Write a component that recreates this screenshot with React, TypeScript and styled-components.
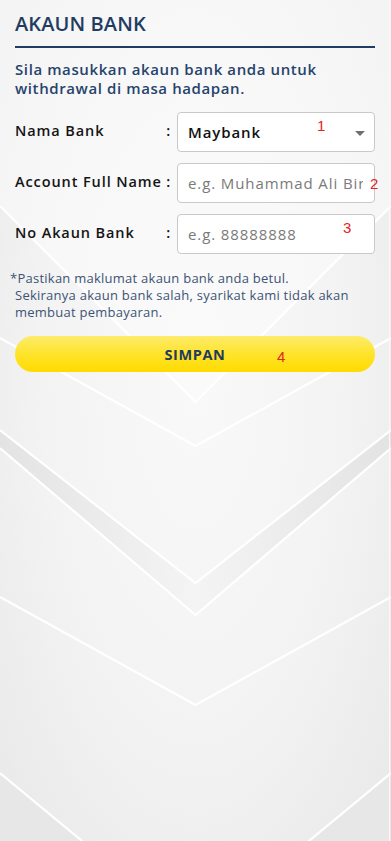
import styled, { createGlobalStyle } from "styled-components";

const GlobalStyle = createGlobalStyle`
	* { box-sizing: border-box; }
	html, body { margin: 0; padding: 0; }
	body {
		font-family: "Open Sans", "Liberation Sans", sans-serif;
		background: #ededed;
	}
`;

const Page = styled.div`
	position: relative;
	width: 391px;
	min-height: 841px;
	overflow: hidden;
	background: radial-gradient(ellipse at 50% 45%, #f9f9f9 0%, #f3f3f3 55%, #e8e8e8 100%);
`;

const Backdrop = styled.svg`
	position: absolute;
	inset: 0;
	width: 391px;
	height: 841px;
	z-index: 0;
`;

const Content = styled.div`
	position: relative;
	z-index: 1;
	padding: 12px 16px 0 15px;
`;

const Title = styled.h1`
	margin: 0;
	font-size: 20px;
	font-weight: 600;
	color: #1f3c63;
	line-height: 24px;
	letter-spacing: 0.1px;
	padding-bottom: 10px;
	border-bottom: 2.5px solid #1f3c63;
`;

const Intro = styled.p`
	margin: 12px 0 14px;
	font-size: 15px;
	font-weight: 600;
	line-height: 19px;
	letter-spacing: 0.6px;
	color: #26436b;
`;

const Form = styled.div`
	display: flex;
	flex-direction: column;
	gap: 11px;
`;

const Row = styled.div`
	position: relative;
	display: grid;
	grid-template-columns: 162px minmax(0, 1fr);
	align-items: center;
`;

const Label = styled.label`
	display: flex;
	justify-content: space-between;
	padding-right: 6px;
	font-size: 14.5px;
	font-weight: 600;
	letter-spacing: 0.9px;
	color: #151515;
	margin-top: -4px;
`;

const Field = styled.div`
	position: relative;
	min-width: 0;
	height: 40px;
	background: #fff;
	border: 1px solid #c9c9c9;
	border-radius: 4px;
	display: flex;
	align-items: center;
	padding: 0 11px 0 10px;
`;

const Value = styled.span<{ $placeholder?: boolean }>`
	flex: 1;
	min-width: 0;
	overflow: hidden;
	font-size: 15px;
	font-weight: ${(p) => (p.$placeholder ? 500 : 600)};
	color: ${(p) => (p.$placeholder ? "#7a7a7a" : "#111")};
	white-space: nowrap;
	letter-spacing: 0.9px;
`;

const Caret = styled.span`
	position: absolute;
	right: 9px;
	top: 18px;
	width: 0;
	height: 0;
	border-left: 5px solid transparent;
	border-right: 5px solid transparent;
	border-top: 5px solid #6f6f6f;
`;

const Mark = styled.span<{ $x: number; $y: number }>`
	position: absolute;
	left: ${(p) => p.$x}px;
	top: ${(p) => p.$y}px;
	font-family: "Liberation Sans", Arial, sans-serif;
	font-size: 15px;
	font-weight: 400;
	letter-spacing: 0;
	color: #e3241f;
	line-height: 1;
`;

const Note = styled.p`
	margin: 16px 0 15px -5px;
	padding-left: 5px;
	text-indent: -5px;
	font-size: 13px;
	font-weight: 500;
	line-height: 17px;
	letter-spacing: 0.25px;
	color: #3d5375;
`;

const SaveButton = styled.button`
	position: relative;
	display: block;
	width: 100%;
	height: 36px;
	border: none;
	border-radius: 18px;
	background: linear-gradient(to bottom, #fdeb6a 0%, #ffe326 55%, #ffdb00 100%);
	font-family: inherit;
	font-size: 14.5px;
	font-weight: 700;
	color: #1f3c5e;
	letter-spacing: 0.6px;
	cursor: pointer;
`;

function Chevrons() {
	const v = (y: number, apex: number) => `0,${y} 195.5,${apex} 391,${y}`;
	return (
		<Backdrop viewBox="0 0 391 841" preserveAspectRatio="none">
			<defs>
				<linearGradient id="band" x1="0" x2="1" y1="0" y2="0">
					<stop offset="0" stopColor="#e3e3e3" />
					<stop offset="0.5" stopColor="#f4f4f4" />
					<stop offset="1" stopColor="#e3e3e3" />
				</linearGradient>
			</defs>
			<polygon points={`0,206 195.5,402 391,206 391,0 0,0`} fill="#fbfbfb" opacity="0.55" />
			<polygon points={`${v(430, 583)} 391,448 195.5,615 0,448`} fill="url(#band)" />
			<polygon points={`0,773 195.5,935 391,773 391,841 0,841`} fill="#e7e7e7" />
			<g fill="none" stroke="#ffffff" strokeWidth="2.2" strokeLinejoin="miter">
				<polyline points={v(206, 402)} />
				<polyline points={v(338, 446)} />
				<polyline points={v(430, 583)} />
				<polyline points={v(448, 615)} />
				<polyline points={v(597, 705)} />
				<polyline points={v(773, 935)} />
			</g>
			<line x1="389.5" y1="0" x2="389.5" y2="841" stroke="#fafafa" strokeWidth="1" />
		</Backdrop>
	);
}

function App() {
	return (
		<Page>
			<GlobalStyle />
			<Chevrons />
			<Content>
				<Title>AKAUN BANK</Title>
				<Intro>
					Sila masukkan akaun bank anda untuk withdrawal di masa hadapan.
				</Intro>
				<Form>
					<Row>
						<Label>
							<span>Nama Bank</span>
							<span>:</span>
						</Label>
						<Field>
							<Value>Maybank</Value>
							<Caret />
						</Field>
						<Mark $x={302} $y={6}>1</Mark>
					</Row>
					<Row>
						<Label>
							<span>Account Full Name</span>
							<span>:</span>
						</Label>
						<Field>
							<Value $placeholder>e.g. Muhammad Ali Bin Abu</Value>
						</Field>
						<Mark $x={355} $y={13}>2</Mark>
					</Row>
					<Row>
						<Label>
							<span>No Akaun Bank</span>
							<span>:</span>
						</Label>
						<Field>
							<Value $placeholder>e.g. 88888888</Value>
						</Field>
						<Mark $x={328} $y={6}>3</Mark>
					</Row>
				</Form>
				<Note>
					*Pastikan maklumat akaun bank anda betul.
					<br />
					Sekiranya akaun bank salah, syarikat kami tidak akan
					<br />
					membuat pembayaran.
				</Note>
				<SaveButton>
					SIMPAN
					<Mark $x={262} $y={13}>4</Mark>
				</SaveButton>
			</Content>
		</Page>
	);
}

export default App;
